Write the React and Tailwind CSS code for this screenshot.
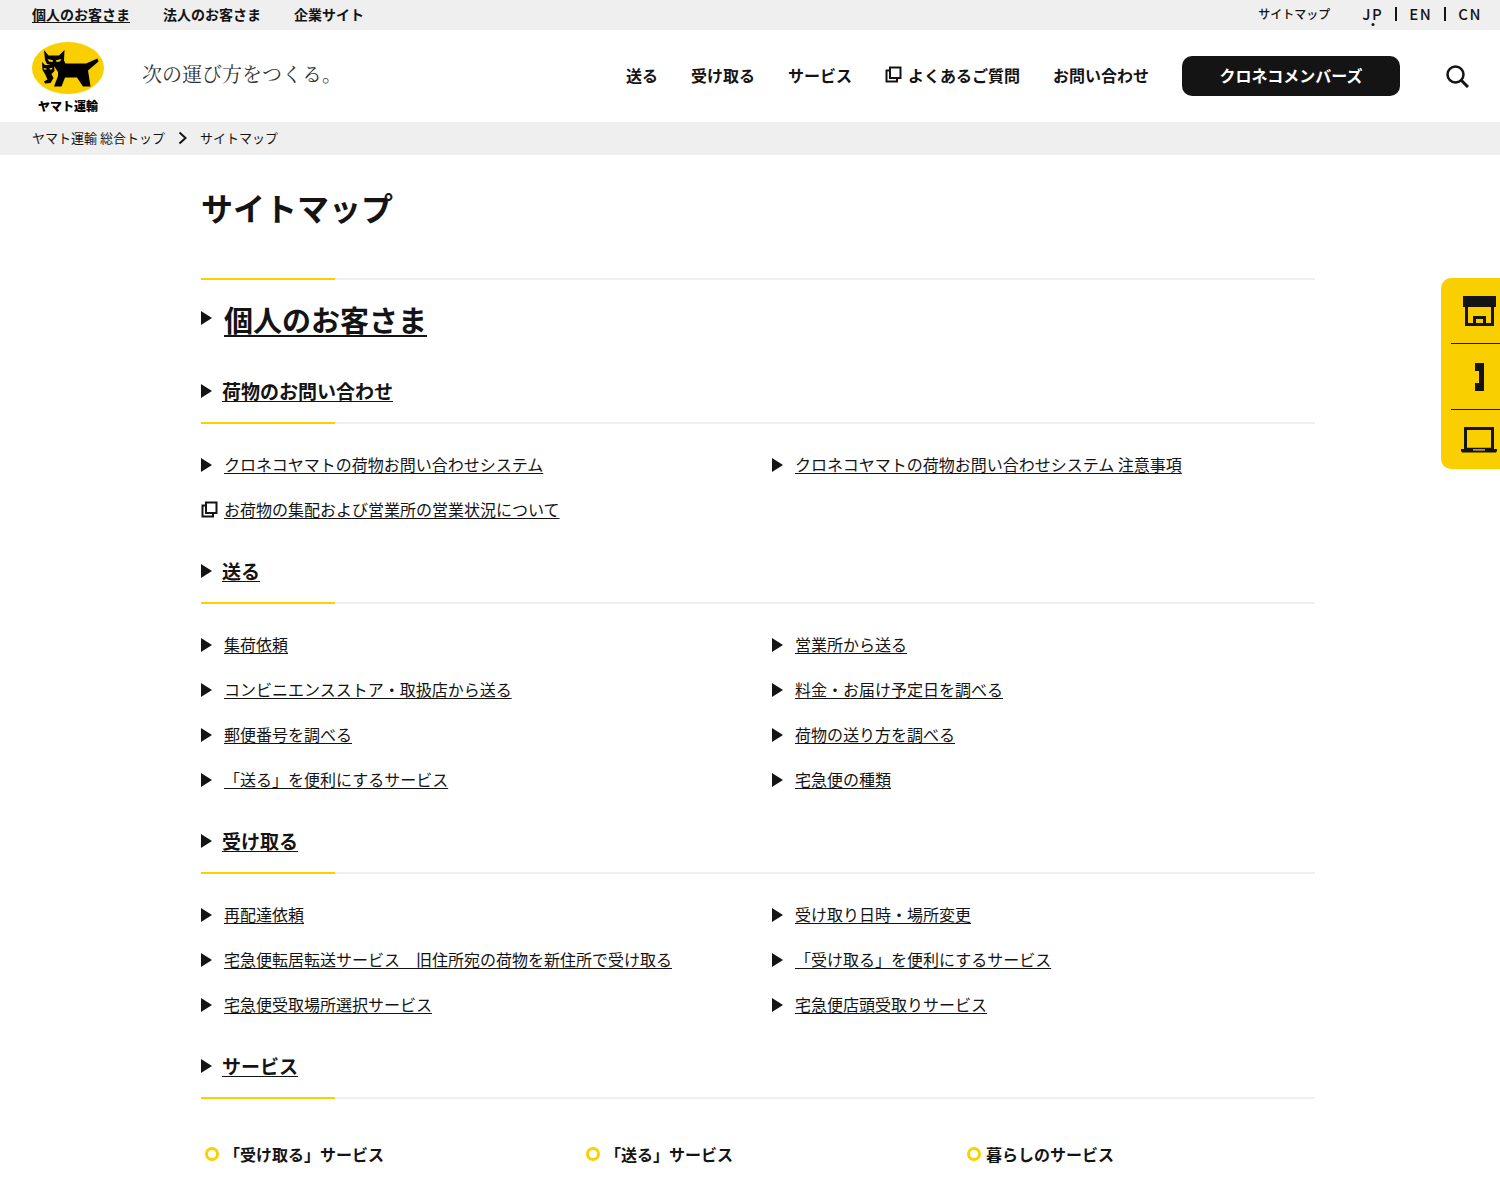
import React from "react";

const sections = [
    {
        title: "荷物のお問い合わせ",
        links: [
            { label: "クロネコヤマトの荷物お問い合わせシステム" },
            { label: "クロネコヤマトの荷物お問い合わせシステム 注意事項" },
            { label: "お荷物の集配および営業所の営業状況について", external: true },
        ],
    },
    {
        title: "送る",
        links: [
            { label: "集荷依頼" },
            { label: "営業所から送る" },
            { label: "コンビニエンスストア・取扱店から送る" },
            { label: "料金・お届け予定日を調べる" },
            { label: "郵便番号を調べる" },
            { label: "荷物の送り方を調べる" },
            { label: "「送る」を便利にするサービス" },
            { label: "宅急便の種類" },
        ],
    },
    {
        title: "受け取る",
        links: [
            { label: "再配達依頼" },
            { label: "受け取り日時・場所変更" },
            { label: "宅急便転居転送サービス　旧住所宛の荷物を新住所で受け取る" },
            { label: "「受け取る」を便利にするサービス" },
            { label: "宅急便受取場所選択サービス" },
            { label: "宅急便店頭受取りサービス" },
        ],
    },
    { title: "サービス", links: [] },
];

const services = ["「受け取る」サービス", "「送る」サービス", "暮らしのサービス"];

function Triangle() {
    return (
        <svg viewBox="0 0 11 14" className="w-[11px] h-[14px] shrink-0" aria-hidden="true">
            <path d="M0 0 11 7 0 14Z" fill="#141414" />
        </svg>
    );
}

function ExternalIcon() {
    return (
        <svg
            viewBox="0 0 17 17"
            className="w-[17px] h-[17px] shrink-0"
            fill="none"
            stroke="#141414"
            strokeWidth="2"
            aria-hidden="true"
        >
            <path d="M5 1.5H15.5V12H5Z" />
            <path d="M5 4.5H1.5V15.5H12V12" />
        </svg>
    );
}

function Logo() {
    return (
        <a href="#" className="flex w-[72px] flex-col items-center pt-1 text-black">
            <svg viewBox="0 0 72 52" className="w-[72px] h-[52px]" aria-hidden="true">
                <ellipse cx="36" cy="26" rx="36" ry="26" fill="#facf00" />
                <path
                    d="M12 8 16.5 13.5H27L32.5 8 32 18.5 33.5 21.5H54L65.5 16.5 66.5 19.5 56 28.5 58.5 44.5H51L45 35.5H33L29.5 44.5H22L26 34V30L22 24 15 22 13 18Z"
                    fill="#000"
                />
                <path
                    d="M10 20 13 23H18L22 21 22.5 29 19.5 32 21.5 36 18.5 41 13 41.5 12 39.5 15.5 37.5 13 32 10.5 28Z"
                    fill="#000"
                />
                <path d="M15.5 17 21 18.2 20.5 20 17 19.6ZM29.5 17 24 18.2 24.5 20 28 19.6Z" fill="#facf00" />
                <path d="M11.5 26 14.6 26.6 14.2 27.8 12.2 27.6ZM20.5 25.4 17.4 26.6 18 27.8 20 27.2Z" fill="#facf00" />
            </svg>
            <span className="mt-1 text-[12px] leading-[16px] font-black whitespace-nowrap">ヤマト運輸</span>
        </a>
    );
}

function TopBar() {
    return (
        <div className="flex h-[30px] items-center justify-between bg-[#efefef] pb-[2px] pl-8 pr-[18px] text-sm font-bold">
            <nav className="flex gap-[33px]">
                <a href="#" className="underline underline-offset-2">個人のお客さま</a>
                <a href="#">法人のお客さま</a>
                <a href="#">企業サイト</a>
            </nav>
            <div className="flex items-center gap-8">
                <a href="#" className="text-[12px] font-medium">サイトマップ</a>
                <nav className="flex items-center gap-3 text-[15px] font-medium tracking-widest">
                    <a href="#" className="relative">
                        JP
                        <span className="absolute bottom-[-1px] left-1/2 size-[3px] -translate-x-1/2 rounded-full bg-[#141414]" />
                    </a>
                    <span className="h-[14px] w-[2px] bg-[#141414]" />
                    <a href="#">EN</a>
                    <span className="h-[14px] w-[2px] bg-[#141414]" />
                    <a href="#">CN</a>
                </nav>
            </div>
        </div>
    );
}

function Header() {
    return (
        <header className="flex h-[92px] items-center justify-between pl-8 pr-[31px]">
            <div className="flex items-center gap-[38px]">
                <Logo />
                <p className="pb-1 font-['Noto_Serif_CJK_JP','Noto_Sans_CJK_JP',serif] text-[20px] text-[#333]">
                    次の運び方をつくる。
                </p>
            </div>
            <div className="flex items-center gap-[46px]">
                <nav className="flex items-center gap-[33px] text-base leading-[20px] font-bold">
                    <a href="#" className="pb-[3px]">送る</a>
                    <a href="#" className="pb-[3px]">受け取る</a>
                    <a href="#" className="pb-[3px]">サービス</a>
                    <a href="#" className="flex items-center gap-[6px] pb-[3px]">
                        <ExternalIcon />
                        よくあるご質問
                    </a>
                    <a href="#" className="pb-[3px]">お問い合わせ</a>
                    <button type="button" className="h-10 w-[218px] rounded-[10px] bg-[#141414] pb-[2px] text-white">
                        クロネコメンバーズ
                    </button>
                </nav>
                <button type="button" aria-label="検索">
                    <svg viewBox="0 0 23 23" className="size-[23px]" fill="none" stroke="#141414" aria-hidden="true">
                        <circle cx="9.5" cy="9.5" r="8" strokeWidth="2.5" />
                        <path d="M15 15 22 22" strokeWidth="3" />
                    </svg>
                </button>
            </div>
        </header>
    );
}

function Breadcrumb() {
    return (
        <nav className="flex h-[33px] items-center gap-[13px] bg-[#efefef] pb-[2px] pl-8 text-[13px]">
            <a href="#">ヤマト運輸 総合トップ</a>
            <svg viewBox="0 0 9 14" className="w-[9px] h-[14px]" fill="none" stroke="#141414" strokeWidth="2" aria-hidden="true">
                <path d="M1.5 1.5 7.5 7 1.5 12.5" />
            </svg>
            <span>サイトマップ</span>
        </nav>
    );
}

function Rule() {
    return (
        <div className="h-[2px] bg-[#efefef]">
            <div className="h-full w-[12%] bg-[#fccf00]" />
        </div>
    );
}

function Section({ title, links }) {
    return (
        <section>
            <h3 className="flex items-center gap-[10px] pt-6 pb-4 text-[19px] leading-[30px] font-bold">
                <Triangle />
                <a href="#" className="underline decoration-1 underline-offset-2">{title}</a>
            </h3>
            <Rule />
            <ul className="mt-[18px] grid grid-cols-2 gap-x-7">
                {links.map((link) => (
                    <li key={link.label} className="flex h-[45px] items-center">
                        <span className="w-[23px] shrink-0">
                            {link.external ? <ExternalIcon /> : <Triangle />}
                        </span>
                        <a href="#" className="pb-[2px] underline decoration-1 underline-offset-2">{link.label}</a>
                    </li>
                ))}
            </ul>
        </section>
    );
}

function SideMenu() {
    return (
        <aside className="absolute top-[278px] right-0 w-[59px] rounded-l-[10px] bg-[#facf00] pl-[10px]">
            <a href="#" aria-label="営業所" className="flex h-[66px] items-center justify-end border-b border-[#141414] pr-1">
                <svg viewBox="0 0 33 30" className="w-[33px] h-[30px]" fill="none" stroke="#141414" aria-hidden="true">
                    <path d="M0 0H33V11H0Z" fill="#141414" stroke="none" />
                    <path d="M3.5 10V28.5H29.5V10" strokeWidth="3" />
                    <path d="M11.5 28V21.5H21.5V28" strokeWidth="3" />
                </svg>
            </a>
            <a href="#" aria-label="電話" className="flex h-[66px] items-center justify-end border-b border-[#141414] pr-4">
                <svg viewBox="0 0 9 28" className="w-[9px] h-[28px]" aria-hidden="true">
                    <path d="M0 0H9V28H0V20H4V8H0Z" fill="#141414" />
                </svg>
            </a>
            <a href="#" aria-label="オンライン" className="flex h-[59px] items-center justify-end pr-[3px]">
                <svg viewBox="0 0 36 26" className="w-[36px] h-[26px]" fill="none" stroke="#141414" aria-hidden="true">
                    <path d="M4.5 22V1.5H31.5V22" strokeWidth="3" />
                    <path d="M0 22H12V23.5H24V22H36V24L35 25.5H1L0 24Z" fill="#141414" stroke="none" />
                    <path d="M4 21.5H32" strokeWidth="1.5" />
                </svg>
            </a>
        </aside>
    );
}

export default function App() {
    return (
        <div className="relative bg-white font-['Noto_Sans_CJK_JP',sans-serif] text-[#141414]">
            <TopBar />
            <Header />
            <Breadcrumb />

            <main className="pt-7 pr-[185px] pb-8 pl-[201px]">
                <h1 className="mb-[47px] text-[32px] leading-[48px] font-bold">サイトマップ</h1>
                <Rule />
                <h2 className="flex items-start gap-3 pt-[17px] pb-[11px] text-[29px] leading-[44px] font-bold">
                    <span className="flex h-[42px] items-center">
                        <Triangle />
                    </span>
                    <a href="#" className="underline decoration-2 underline-offset-3">個人のお客さま</a>
                </h2>
                {sections.map((section) => (
                    <Section key={section.title} {...section} />
                ))}
                <ul className="mt-[25px] grid grid-cols-3 gap-[29px]">
                    {services.map((service) => (
                        <li key={service} className="flex items-center gap-[5px] pl-1 font-bold">
                            <span className="size-[14px] shrink-0 rounded-full border-3 border-[#fccf00]" />
                            {service}
                        </li>
                    ))}
                </ul>
            </main>

            <SideMenu />
        </div>
    );
}
